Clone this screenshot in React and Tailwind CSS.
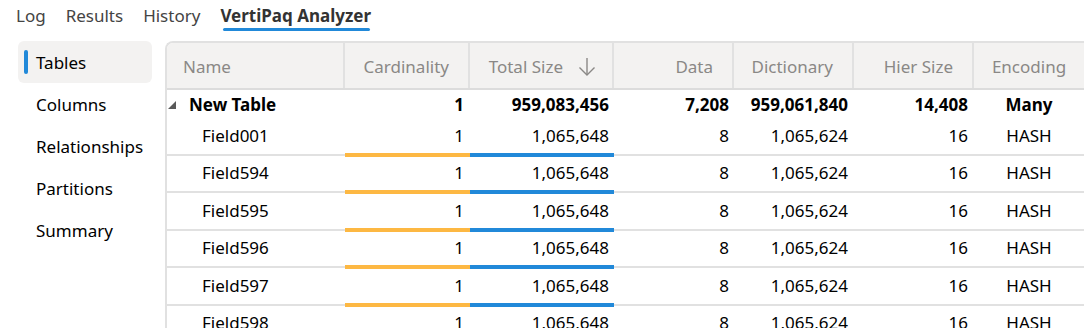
import React from "react";

const cols = "grid grid-cols-[178px_125px_144px_120px_120px_120px_110px]";

const fields = ["Field001", "Field594", "Field595", "Field596", "Field597", "Field598"];

function Triangle() {
  return (
    <svg width="8" height="8" viewBox="0 0 8 8" className="shrink-0">
      <polygon points="0,8 8,8 8,0" fill="#595959" />
    </svg>
  );
}

function SortArrow() {
  return (
    <svg width="18" height="19" viewBox="0 0 18 19" fill="none" stroke="#8a8886" strokeWidth="1.4">
      <line x1="9" y1="1" x2="9" y2="18" />
      <polyline points="1.5,10.5 9,18 16.5,10.5" />
    </svg>
  );
}

function Cell({ children, className = "", bar }) {
  return (
    <div className="flex flex-col h-full">
      <div className={"flex-1 flex items-center pb-[1px] " + className}>{children}</div>
      {bar ? (
        <div className={"h-[4px] -mt-[1px] mb-[-1px] " + bar} />
      ) : (
        <div className="h-[2px] bg-[#e1e1e1]" />
      )}
    </div>
  );
}

export default function App() {
  const tabs = ["Log", "Results", "History"];
  const side = ["Tables", "Columns", "Relationships", "Partitions", "Summary"];

  return (
    <div className="w-[1084px] h-[328px] overflow-hidden bg-white text-[17px] text-black font-['Noto_Sans',sans-serif]">
      {/* TABS */}
      <div className="flex gap-[20px] pl-[16px] pt-[4px] h-[41px]">
        {tabs.map((t) => (
          <div key={t} className="leading-[24px] text-[#444]">{t}</div>
        ))}
        <div className="flex flex-col items-center">
          <div className="leading-[24px] font-bold text-[#333]">VertiPaq Analyzer</div>
          <div className="h-[3px] w-[calc(100%-4px)] ml-[2px] rounded-full bg-[#2189d9]" />
        </div>
      </div>

      <div className="flex">
        {/* SIDEBAR */}
        <div className="w-[165px] shrink-0 pl-[18px] pr-[13px]">
          {side.map((s, i) => (
            <div
              key={s}
              className={
                "h-[42px] flex items-center rounded-md " +
                (i === 0 ? "bg-[#f3f2f1]" : "")
              }
            >
              <div className={"w-[4px] h-[24px] rounded-full ml-[6px] mr-[8px] " + (i === 0 ? "bg-[#2189d9]" : "")} />
              <span className="leading-none">{s}</span>
            </div>
          ))}
        </div>

        {/* TABLE */}
        <div className="flex-1 border-l-2 border-t-2 border-[#e1e1e1] rounded-tl-lg overflow-hidden">
          <div className={cols + " h-[47px] bg-[#f3f2f1] border-b-2 border-[#dcdcdc] text-[#8a8886]"}>
            <div className="flex items-center pt-[2px] pl-[16px] border-r-2 border-[#e1e1e1]">Name</div>
            <div className="flex items-center pt-[2px] justify-end pr-[19px] border-r-2 border-[#e1e1e1]">Cardinality</div>
            <div className="flex items-center pt-[2px] justify-end gap-[15px] pr-[16px] border-r-2 border-[#e1e1e1]">
              <span>Total Size</span>
              <SortArrow />
            </div>
            <div className="flex items-center pt-[2px] justify-end pr-[19px] border-r-2 border-[#e1e1e1]">Data</div>
            <div className="flex items-center pt-[2px] justify-end pr-[19px] border-r-2 border-[#e1e1e1]">Dictionary</div>
            <div className="flex items-center pt-[2px] justify-end pr-[19px] border-r-2 border-[#e1e1e1]">Hier Size</div>
            <div className="flex items-center pt-[2px] justify-center">Encoding</div>
          </div>

          {/* group row */}
          <div className={cols + " h-[28px] font-bold items-center pt-[2px]"}>
            <div className="flex items-center pl-[1px] gap-[13px]">
              <Triangle />
              <span>New Table</span>
            </div>
            <div className="text-right pr-[6px]">1</div>
            <div className="text-right pr-[5px]">959,083,456</div>
            <div className="text-right pr-[5px]">7,208</div>
            <div className="text-right pr-[6px]">959,061,840</div>
            <div className="text-right pr-[6px]">14,408</div>
            <div className="text-center">Many</div>
          </div>

          {fields.map((f) => (
            <div key={f} className={cols + " h-[37.5px]"}>
              <Cell className="pl-[35px]">{f}</Cell>
              <Cell className="justify-end pr-[6px]" bar="bg-[#fdb843]">1</Cell>
              <Cell className="justify-end pr-[5px]" bar="bg-[#2189d9]">1,065,648</Cell>
              <Cell className="justify-end pr-[5px]">8</Cell>
              <Cell className="justify-end pr-[6px]">1,065,624</Cell>
              <Cell className="justify-end pr-[6px]">16</Cell>
              <Cell className="justify-center">HASH</Cell>
            </div>
          ))}
        </div>
      </div>
    </div>
  );
}
